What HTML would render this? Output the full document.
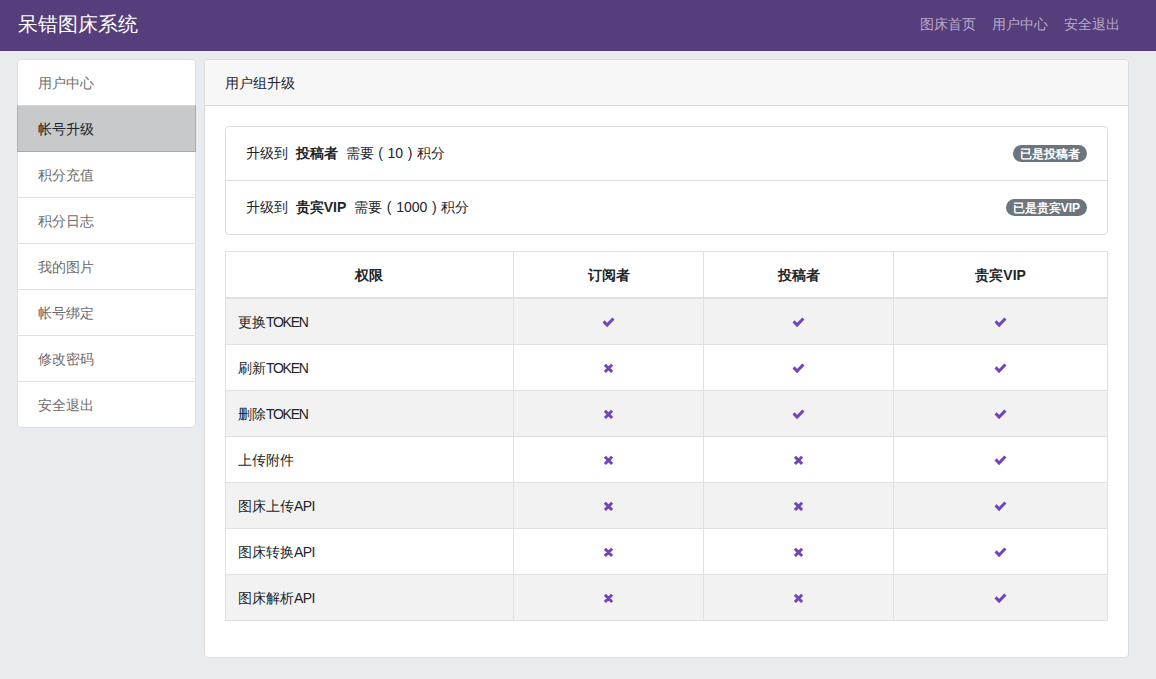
<!DOCTYPE html>
<html><head><meta charset="utf-8">
<style>
*{box-sizing:border-box;margin:0;padding:0}
html,body{width:1156px;height:679px;overflow:hidden}
body{background:#e9ecef;font-family:"Liberation Sans",sans-serif;font-size:14px;line-height:21px;color:#212529;position:relative}
.nav{position:absolute;left:0;top:0;width:1156px;height:51px;background:#563d7c}
.brand{position:absolute;left:18px;top:12px;font-size:20px;line-height:24px;color:#fff}
.links{position:absolute;top:14px;left:912px;white-space:nowrap}
.links span{position:absolute;top:0;color:#b6aac9;font-size:14px;line-height:21px}
.side{position:absolute;left:17px;top:59px;width:179px;height:369px;background:#fff;border:1px solid #dfdfdf;border-radius:4px}
.side div{height:46px;padding:13px 20px 11px;border-top:1px solid #e0e0e0;color:#6c6c6c}
.side div:first-child{border-top:0;height:45px;padding-top:13px}
.side div.act{background:#c8c9cb;color:#212529;margin:0 -1px;height:47px;border:1px solid #b0b0b0;border-top-color:#d6d6d6;border-right-color:#a9a9a9;border-bottom-color:#a9a9a9;padding:13px 21px 11px 20px;position:relative}
.side div.act+div{border-top:0;height:45px;padding-top:13px}
.card{position:absolute;left:204px;top:59px;width:925px;height:599px;background:#fff;border:1px solid #dcdcdc;border-radius:4px;overflow:hidden}
.chead{height:46px;background:#f7f7f7;border-bottom:1px solid #dcdcdc;padding:13px 20px 0;color:#212529}
.lg{position:absolute;left:20px;top:66px;width:883px;height:109px;border:1px solid #dcdcdc;border-radius:4px}
.lg .it{position:relative;height:53px;padding:16px 20px;color:#212529}
.lg .it+.it{border-top:1px solid #dcdcdc;height:54px;padding-top:16px}
.lg b{font-weight:bold}
.p{display:inline-block;width:14px;text-align:center}
.badge{position:absolute;right:20px;top:18px;height:17px;background:#6c757d;color:#fff;font-size:12px;line-height:16px;padding-top:1px !important;font-weight:bold;border-radius:9px;padding:0 7px}
table{position:absolute;left:20px;top:191px;width:883px;border-collapse:collapse}
td,th{border:1px solid #dee2e6;padding:13px 12px 11px;height:46px;line-height:21px;font-size:14px}
th{font-weight:bold;text-align:center;border-bottom:2px solid #dee2e6;height:46px}
td{text-align:center}
td:first-child{text-align:left}
tr.s td{background:#f2f2f2}
i{font-style:normal;letter-spacing:-1.3px}
i.a{letter-spacing:-0.6px}
svg.ov{position:absolute;left:0;top:0}
</style></head><body>
<div class="nav">
<div class="brand">呆错图床系统</div>
<div class="links"><span style="left:8px">图床首页</span><span style="left:80px">用户中心</span><span style="left:152px">安全退出</span></div>
</div>
<div class="side">
<div>用户中心</div>
<div class="act">帐号升级</div>
<div>积分充值</div>
<div>积分日志</div>
<div>我的图片</div>
<div>帐号绑定</div>
<div>修改密码</div>
<div>安全退出</div>
</div>
<div class="card">
<div class="chead">用户组升级</div>
<div class="lg">
<div class="it">升级到&nbsp; <b>投稿者</b>&nbsp; 需要<span class="p">(</span>10<span class="p">)</span>积分<span class="badge">已是投稿者</span></div>
<div class="it">升级到&nbsp; <b>贵宾VIP</b>&nbsp; 需要<span class="p">(</span>1000<span class="p">)</span>积分<span class="badge">已是贵宾VIP</span></div>
</div>
<table>
<colgroup><col style="width:288px"><col style="width:191px"><col style="width:190px"><col style="width:214px"></colgroup>
<tr><th>权限</th><th>订阅者</th><th>投稿者</th><th>贵宾VIP</th></tr>
<tr class="s"><td>更换<i>TOKEN</i></td><td></td><td></td><td></td></tr>
<tr><td>刷新<i>TOKEN</i></td><td></td><td></td><td></td></tr>
<tr class="s"><td>删除<i>TOKEN</i></td><td></td><td></td><td></td></tr>
<tr><td>上传附件</td><td></td><td></td><td></td></tr>
<tr class="s"><td>图床上传<i class="a">API</i></td><td></td><td></td><td></td></tr>
<tr><td>图床转换<i class="a">API</i></td><td></td><td></td><td></td></tr>
<tr class="s"><td>图床解析<i class="a">API</i></td><td></td><td></td><td></td></tr>
</table>
</div>
<svg class="ov" width="1156" height="679" viewBox="0 0 1156 679"><path d="M603.6,321.4L607.1,325.0L613.4,318.5M793.6,321.4L797.1,325.0L803.4,318.5M995.6,321.4L999.1,325.0L1005.4,318.5M604.9,364.8L612.1,372.0M612.1,364.8L604.9,372.0M793.6,367.4L797.1,371.0L803.4,364.5M995.6,367.4L999.1,371.0L1005.4,364.5M604.9,410.8L612.1,418.0M612.1,410.8L604.9,418.0M793.6,413.4L797.1,417.0L803.4,410.5M995.6,413.4L999.1,417.0L1005.4,410.5M604.9,456.8L612.1,464.0M612.1,456.8L604.9,464.0M794.9,456.8L802.1,464.0M802.1,456.8L794.9,464.0M995.6,459.4L999.1,463.0L1005.4,456.5M604.9,502.8L612.1,510.0M612.1,502.8L604.9,510.0M794.9,502.8L802.1,510.0M802.1,502.8L794.9,510.0M995.6,505.4L999.1,509.0L1005.4,502.5M604.9,548.8L612.1,556.0M612.1,548.8L604.9,556.0M794.9,548.8L802.1,556.0M802.1,548.8L794.9,556.0M995.6,551.4L999.1,555.0L1005.4,548.5M604.9,594.8L612.1,602.0M612.1,594.8L604.9,602.0M794.9,594.8L802.1,602.0M802.1,594.8L794.9,602.0M995.6,597.4L999.1,601.0L1005.4,594.5" fill="none" stroke="#6f44bd" stroke-width="3"/></svg>
</body></html>
